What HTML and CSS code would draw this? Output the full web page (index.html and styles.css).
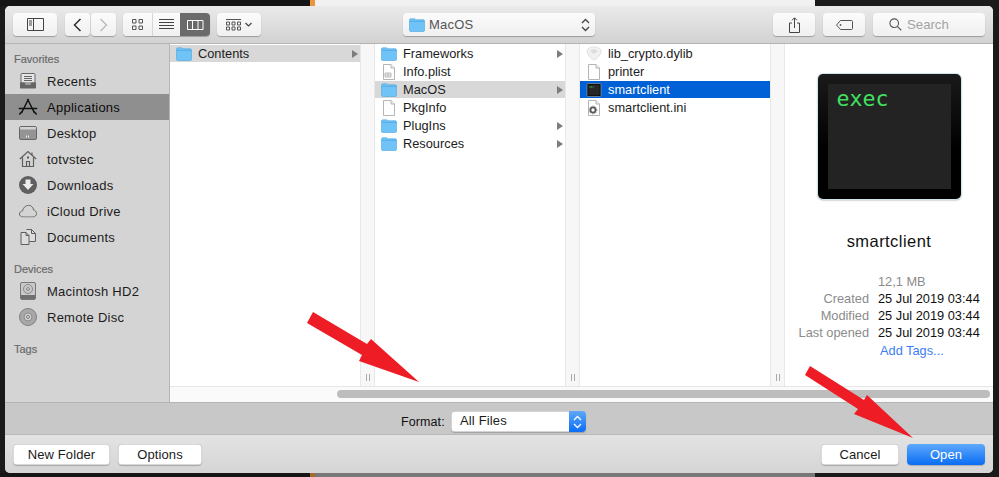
FILE: index.html
```html
<!DOCTYPE html>
<html lang="en">
<head>
<meta charset="utf-8">
<title>Open</title>
<link rel="stylesheet" href="styles.css">
</head>
<body>
<svg class="defs" width="0" height="0" aria-hidden="true">
  <symbol id="folder" viewBox="0 0 16 14">
    <path d="M.5 2.2C.5 1.3 1 .8 1.8.8h3.6c.7 0 1 .7 1.6.9h7.2c.8 0 1.3.5 1.3 1.3v9.2c0 .8-.5 1.3-1.3 1.3H1.8c-.8 0-1.3-.5-1.3-1.3z" fill="#6fc3f7" stroke="#4ea6dd" stroke-width=".6"/>
    <path d="M.6 3.4h14.8" stroke="#4ea6dd" stroke-width=".7" fill="none"/>
  </symbol>
  <symbol id="doc" viewBox="0 0 14 16">
    <path d="M1.5.5h7.5l3.5 3.5v11.5h-11z" fill="#fff" stroke="#b5b5b5"/>
    <path d="M9 .5v3.5h3.5" fill="#f0f0f0" stroke="#b5b5b5"/>
  </symbol>
  <symbol id="tri" viewBox="0 0 6 8"><path d="M0 0l6 4-6 4z" fill="#7c7c7c"/></symbol>
  <symbol id="updown" viewBox="0 0 9 14"><path d="M1 5l3.5-3.5L8 5M1 9l3.5 3.5L8 9" fill="none" stroke="currentColor" stroke-width="1.3"/></symbol>
</svg>

<div class="strip">
  <div class="strip-dark"></div><div class="strip-orange"></div><div class="strip-light"></div><div class="strip-rest"></div>
</div>

<div class="window">
  <header class="toolbar">
    <button class="tb tb-sidebar"><svg width="17" height="13" viewBox="0 0 17 13"><path d="M.5.5h16v12H.5zM6.5.5v12M2 3h3M2 5h3M2 7h3" fill="none" stroke="#444"/></svg></button>
    <div class="nav">
      <button class="tb tb-nav"><svg width="9" height="14" viewBox="0 0 9 14"><path d="M7.5 1L1.5 7l6 6" fill="none" stroke="#2c2c2c" stroke-width="1.5"/></svg></button>
      <button class="tb tb-nav"><svg width="9" height="14" viewBox="0 0 9 14"><path d="M1.5 1l6 6-6 6" fill="none" stroke="#bcbcbc" stroke-width="1.5"/></svg></button>
    </div>
    <div class="views">
      <button class="view view-a"><svg width="11" height="11" viewBox="0 0 11 11"><path d="M.5.5h3.500v3.500h-3.500zM7 .5h3.500v3.500H7zM.5 7h3.500v3.500h-3.500zM7 7h3.500v3.500H7z" fill="none" stroke="#555"/></svg></button>
      <button class="view view-b"><svg width="15" height="11" viewBox="0 0 15 11"><path d="M0 .5h15M0 3.500h15M0 6.500h15M0 9.500h15" stroke="#444"/></svg></button>
      <button class="view view-c"><svg width="17" height="10" viewBox="0 0 17 10"><path d="M.5.500h15.500v9H.5zM5.500.500v9M11 .500v9" fill="none" stroke="#fff"/></svg></button>
    </div>
    <button class="tb tb-arrange"><svg width="15" height="12" viewBox="0 0 15 12"><path d="M0 .5h15M.5 3h3v3h-3zM6 3h3v3H6zM11.500 3h3v3h-3zM.5 8h3v3h-3zM6 8h3v3H6zM11.500 8h3v3h-3z" fill="none" stroke="#555"/></svg><svg width="7" height="5" viewBox="0 0 7 5"><path d="M.5 1l3 3 3-3" fill="none" stroke="#444" stroke-width="1.200"/></svg></button>
    <button class="tb tb-path">
      <svg class="ic16" width="16" height="14"><use href="#folder"/></svg>
      <span class="path-name">MacOS</span>
      <svg class="path-arrows" width="9" height="14"><use href="#updown"/></svg>
    </button>
    <button class="tb tb-icon"><svg width="11" height="16" viewBox="0 0 11 16"><path d="M3 6H.5v9.500h10V6H8M5.500 11V1M3 3.300L5.500.8 8 3.300" fill="none" stroke="#444"/></svg></button>
    <button class="tb tb-icon"><svg width="17" height="10" viewBox="0 0 17 10"><path d="M4.500.5h11c.6 0 1 .4 1 1v7c0 .6-.4 1-1 1h-11L.5 5z" fill="none" stroke="#555"/><circle cx="4.500" cy="5" r=".9" fill="#555"/></svg></button>
    <div class="tb tb-search">
      <svg width="13" height="13" viewBox="0 0 13 13"><circle cx="5.200" cy="5.200" r="4.300" fill="none" stroke="#555" stroke-width="1.100"/><path d="M8.300 8.300l4 4" stroke="#555" stroke-width="1.200"/></svg>
      <span>Search</span>
    </div>
  </header>

  <main class="body">
    <nav class="sidebar">
      <div class="side-head">Favorites</div>
      <div class="side-item"><svg width="18" height="16" viewBox="0 0 18 16"><path d="M2 10V1.500C2 1 2.500.5 3 .5h12c.5 0 1 .5 1 1V10z" fill="#e6e6e6" stroke="#666"/><path d="M5 3.500h8M5 5.500h8M5 7.500h8" stroke="#666"/><path d="M1 9.500h4.500l1 2h5l1-2H17v5c0 .6-.4 1-1 1H2c-.6 0-1-.4-1-1z" fill="#666"/></svg><span>Recents</span></div>
      <div class="side-item side-active"><svg width="19" height="18" viewBox="0 0 19 18"><path d="M10 1L3 15M9 1L16 15M0 10.500h19M.8 16.500L4 13M18.200 16.500L15 13" fill="none" stroke="#111" stroke-width="1.500"/></svg><span>Applications</span></div>
      <div class="side-item"><svg width="18" height="14" viewBox="0 0 18 14"><rect x=".5" y=".5" width="17" height="13" rx="1.500" fill="#949494" stroke="#666"/><rect x="1" y="1" width="16" height="2.500" fill="#d2d2d2"/><path d="M7 10.500h4" stroke="#eee" stroke-dasharray="1 1" stroke-width="2"/></svg><span>Desktop</span></div>
      <div class="side-item"><svg width="18" height="17" viewBox="0 0 18 17"><path d="M.8 8.500L9 1l8.200 7.500M3.500 7v9h11V7M7.500 16v-5h3v5M13 2v3" fill="none" stroke="#5e5e5e" stroke-width="1.200"/><rect x="8" y="6" width="2" height="2" fill="#5e5e5e"/></svg><span>totvstec</span></div>
      <div class="side-item"><svg width="18" height="18" viewBox="0 0 18 18"><circle cx="9" cy="9" r="9" fill="#5f5f5f"/><path d="M6.500 3.500h5V8H14.500L9 14 3.500 8h3z" fill="#ececec"/></svg><span>Downloads</span></div>
      <div class="side-item"><svg width="18" height="13" viewBox="0 0 18 13"><path d="M4 12.500c-2 0-3.500-1.300-3.500-3 0-1.600 1.200-2.800 3-3C4 3.500 6.500.8 9.500.8c2.800 0 4.700 1.900 5 4.700 1.800.3 3 1.700 3 3.500 0 2-1.500 3.500-3.500 3.500z" fill="none" stroke="#6b6b6b"/></svg><span>iCloud Drive</span></div>
      <div class="side-item"><svg width="17" height="17" viewBox="0 0 17 17"><path d="M1.500 4h5l3 3v9h-8zM6.500 4v3h3M7 1h5l4 4v8h-6" fill="#ddd" stroke="#5e5e5e"/><path d="M12 1v4h4" fill="none" stroke="#5e5e5e"/></svg><span>Documents</span></div>
      <div class="side-head side-head-gap">Devices</div>
      <div class="side-item"><svg width="16" height="18" viewBox="0 0 16 18"><rect x=".5" y=".5" width="15" height="17" rx="1.500" fill="#c9c9c9" stroke="#777"/><circle cx="8" cy="7" r="4.500" fill="none" stroke="#8a8a8a"/><circle cx="8" cy="7" r="1.500" fill="none" stroke="#8a8a8a"/><rect x="1" y="13" width="14" height="4" fill="#707070"/></svg><span>Macintosh HD2</span></div>
      <div class="side-item"><svg width="18" height="18" viewBox="0 0 18 18"><circle cx="9" cy="9" r="8.500" fill="#a8a8a8" stroke="#808080"/><circle cx="9" cy="9" r="4" fill="#cfcfcf" stroke="#8b8b8b"/><circle cx="9" cy="9" r="1.500" fill="#e2e2e2" stroke="#777"/></svg><span>Remote Disc</span></div>
      <div class="side-head side-head-gap">Tags</div>
    </nav>

    <div class="browser">
      <div class="columns">
        <section class="column">
          <div class="row row-dim"><svg class="ic16" width="16" height="14"><use href="#folder"/></svg><span class="row-name">Contents</span><svg class="tri" width="6" height="8"><use href="#tri"/></svg></div>
        </section>
        <div class="gutter"><i></i><i></i></div>
        <section class="column">
          <div class="row"><svg class="ic16" width="16" height="14"><use href="#folder"/></svg><span class="row-name">Frameworks</span><svg class="tri" width="6" height="8"><use href="#tri"/></svg></div>
          <div class="row"><svg class="ic16" width="14" height="16"><use href="#doc"/><path d="M4 9h6v4H4zM7 9v4M4 11h6" fill="none" stroke="#aaa" stroke-width=".8"/></svg><span class="row-name">Info.plist</span></div>
          <div class="row row-dim"><svg class="ic16" width="16" height="14"><use href="#folder"/></svg><span class="row-name">MacOS</span><svg class="tri" width="6" height="8"><use href="#tri"/></svg></div>
          <div class="row"><svg class="ic16" width="14" height="16"><use href="#doc"/></svg><span class="row-name">PkgInfo</span></div>
          <div class="row"><svg class="ic16" width="16" height="14"><use href="#folder"/></svg><span class="row-name">PlugIns</span><svg class="tri" width="6" height="8"><use href="#tri"/></svg></div>
          <div class="row"><svg class="ic16" width="16" height="14"><use href="#folder"/></svg><span class="row-name">Resources</span><svg class="tri" width="6" height="8"><use href="#tri"/></svg></div>
        </section>
        <div class="gutter"><i></i><i></i></div>
        <section class="column">
          <div class="row"><svg class="ic16" width="16" height="15" viewBox="0 0 16 15"><path d="M8 1c3 0 6 1 7 3 0 5-3 8-7 10C4 12 1 9 1 4c1-2 4-3 7-3z" fill="#f1f1f1" stroke="#e0e0e0"/><path d="M4 5l4-2 4 2-4 3z" fill="#dcdcdc"/></svg><span class="row-name">lib_crypto.dylib</span></div>
          <div class="row"><svg class="ic16" width="14" height="16"><use href="#doc"/></svg><span class="row-name">printer</span></div>
          <div class="row row-sel"><svg class="ic16" width="15" height="14" viewBox="0 0 15 14"><rect x=".5" y=".5" width="14" height="13" rx="1" fill="#111" stroke="#bbb" stroke-width=".5"/><rect x="2" y="2" width="11" height="10" fill="#262626"/><path d="M3 4h4" stroke="#3fe060" stroke-dasharray="1 .6"/></svg><span class="row-name">smartclient</span></div>
          <div class="row"><svg class="ic16" width="14" height="16"><use href="#doc"/><circle cx="7" cy="10" r="2.500" fill="none" stroke="#555" stroke-width="1.600"/><circle cx="7" cy="10" r="3.800" fill="none" stroke="#555" stroke-width="1" stroke-dasharray="1 1"/></svg><span class="row-name">smartclient.ini</span></div>
        </section>
        <div class="gutter"><i></i><i></i></div>
        <aside class="preview">
          <div class="big-icon"><div class="big-screen">exec</div></div>
          <div class="file-name">smartclient</div>
          <dl class="meta">
            <dt></dt><dd class="meta-size">12,1 MB</dd>
            <dt>Created</dt><dd>25 Jul 2019 03:44</dd>
            <dt>Modified</dt><dd>25 Jul 2019 03:44</dd>
            <dt>Last opened</dt><dd>25 Jul 2019 03:44</dd>
            <dt></dt><dd class="meta-link">Add Tags...</dd>
          </dl>
        </aside>
      </div>
      <div class="hscroll"><div class="thumb"></div></div>
    </div>
  </main>

  <div class="format">
    <span class="format-label">Format:</span>
    <div class="select"><span class="select-text">All Files</span><span class="select-arrows"><svg width="9" height="14"><use href="#updown"/></svg></span></div>
  </div>

  <footer class="actions">
    <button class="btn btn-new">New Folder</button>
    <button class="btn btn-options">Options</button>
    <span class="actions-space"></span>
    <button class="btn btn-cancel">Cancel</button>
    <button class="btn btn-open">Open</button>
  </footer>

  <svg class="arrows" width="999" height="477" viewBox="0 0 999 477" aria-hidden="true">
    <path d="M313 312L367 344L371 339L419 382L359 361L362 355L307 323z" fill="#ee1c25"/>
    <path d="M810 366L864 400L867 395L913 438L854 414L858 409L805 375z" fill="#ee1c25"/>
  </svg>
</div>

<div class="strip strip-bottom">
  <div class="strip-dark"></div><div class="strip-orange"></div><div class="strip-light"></div><div class="strip-rest"></div>
</div>
</body>
</html>
```

FILE: styles.css
```css
* { box-sizing: border-box; }
html, body { margin: 0; height: 477px; overflow: hidden; }
body {
  background: #1a1a1a;
  font-family: "Liberation Sans", Arial, sans-serif;
  font-size: 13px;
  color: #1c1c1c;
  display: flex;
  flex-direction: column;
  position: relative;
}
.defs { position: absolute; }
button { font: inherit; color: inherit; padding: 0; margin: 0; }

.strip { height: 6px; display: flex; flex: none; }
.strip-bottom { height: 4px; }
.strip-dark { width: 310px; background: #151515; }
.strip-orange { width: 5px; background: #e9963a; }
.strip-light { width: 500px; background: #f1f1f1; }
.strip-rest { flex: 1; background: #1b1b1b; }
.strip-bottom .strip-orange { background: #a8692a; }
.strip-bottom .strip-light { background: #787878; }

.window {
  flex: none;
  height: 467px;
  margin: 0 6px 0 5px;
  border-radius: 5px;
  overflow: hidden;
  display: flex;
  flex-direction: column;
  background: #d4d4d4;
}

.toolbar {
  flex: none;
  height: 38px;
  padding: 7px 8px 0;
  display: flex;
  align-items: flex-start;
  background: linear-gradient(#eaeaea, #d2d2d2);
  border-bottom: 1px solid #b4b4b4;
}
.tb {
  height: 23px;
  border: 0;
  border-radius: 4px;
  background: linear-gradient(#fbfbfb, #f0f0f0);
  box-shadow: 0 1px 1px rgba(0,0,0,.28);
  display: flex;
  align-items: center;
  justify-content: center;
}
.tb-sidebar { width: 44px; }
.nav { display: flex; gap: 1px; margin-left: 8px; }
.tb-nav { width: 25px; }
.views {
  display: flex;
  margin-left: 7px;
  height: 23px;
  border-radius: 4px;
  overflow: hidden;
  box-shadow: 0 1px 1px rgba(0,0,0,.28);
}
.view {
  border: 0;
  height: 23px;
  background: linear-gradient(#fbfbfb, #f0f0f0);
  display: flex;
  align-items: center;
  justify-content: center;
}
.view-a { width: 30px; border-right: 1px solid #d6d6d6; }
.view-b { width: 27px; }
.view-c { width: 30px; background: #6a6a6a; }
.tb-arrange { width: 44px; margin-left: 7px; gap: 4px; }
.tb-path {
  width: 192px;
  margin-left: 142px;
  margin-right: 178px;
  padding: 0 5px 0 6px;
  justify-content: flex-start;
}
.path-name { margin-left: 4px; font-size: 13px; letter-spacing: .2px; color: #555; flex: 1; text-align: left; }
.path-arrows { color: #444; }
.tb-icon { width: 42px; margin-right: 8px; }
.tb-search {
  width: 112px;
  justify-content: flex-start;
  padding-left: 16px;
  gap: 5px;
  color: #a3a3a3;
  font-size: 13.2px;
}

.body { flex: none; height: 358px; display: flex; }

.sidebar {
  flex: none;
  width: 165px;
  background: #d4d4d4;
  border-right: 1px solid #b6b6b6;
  padding-top: 6px;
}
.side-head {
  height: 18px;
  line-height: 18px;
  padding-left: 9px;
  font-size: 11px;
  font-weight: 400;
  color: #6a6a6a;
  -webkit-text-stroke: .2px #6a6a6a;
}
.side-head-gap { margin-top: 10px; }
.side-item {
  height: 26px;
  display: flex;
  align-items: center;
  padding-left: 42px;
  position: relative;
  letter-spacing: .25px;
}
.side-item svg { position: absolute; left: 23px; top: 50%; transform: translate(-50%, -50%); }
.side-active { background: #8f8f8f; color: #0b0b0b; }

.browser { flex: 1; min-width: 0; display: flex; flex-direction: column; background: #fff; }
.columns { flex: 1; min-height: 0; display: flex; }
.column { flex: none; width: 190px; padding-top: 1px; background: #fff; }
.row {
  height: 17px;
  margin-bottom: 1px;
  display: flex;
  align-items: center;
  padding: 0 2px 0 6px;
}
.row-dim { background: #d8d8d8; }
.row-sel { background: #0060d5; color: #fff; }
.ic16 { flex: none; width: 16px; }
.row-name { margin-left: 6px; flex: 1; font-size: 12.8px; }
.tri { flex: none; }
.gutter {
  flex: none;
  width: 15px;
  background: #f7f7f7;
  border-left: 1px solid #e8e8e8;
  border-right: 1px solid #e8e8e8;
  display: flex;
  align-items: flex-end;
  justify-content: center;
  gap: 2px;
  padding-bottom: 5px;
}
.gutter i { width: 1px; height: 7px; background: #a8a8a8; }

.preview { flex: 1; min-width: 0; background: #fff; padding-top: 30px; display: flex; flex-direction: column; align-items: center; }
.big-icon {
  width: 143px;
  height: 125px;
  flex: none;
  padding: 10px;
  border-radius: 5px;
  background: linear-gradient(#1a1a1a, #000 60%);
  box-shadow: 0 0 0 1px #cfe3ea, 0 1px 2px rgba(0,0,0,.5);
}
.big-screen {
  width: 123px;
  height: 105px;
  background: #232323;
  padding: 2px 9px;
  color: #3fe060;
  font-family: "DejaVu Sans Mono", monospace;
  font-size: 21.6px;
  line-height: 26px;
}
.file-name { margin-top: 32px; height: 20px; line-height: 20px; font-size: 16.5px; letter-spacing: .45px; color: #111; }
.meta {
  align-self: flex-start;
  margin: 22px 0 0;
  display: grid;
  grid-template-columns: 84px auto;
  column-gap: 9px;
  grid-auto-rows: 17px;
  line-height: 17px;
  font-size: 12.8px;
}
.meta dt { text-align: right; color: #8b8b8b; }
.meta dd { margin: 0; color: #111; }
.meta-size { color: #8b8b8b !important; }
.meta-link { color: #3c7cf6 !important; margin-left: 2px !important; padding-top: 1px; }

.hscroll {
  flex: none;
  height: 16px;
  background: #fafafa;
  border-top: 1px solid #e6e6e6;
  padding: 3px 3px 0 167px;
}
.thumb { height: 8px; border-radius: 4px; background: #bdbdbd; }

.format {
  flex: none;
  height: 33px;
  background: #c8c8c8;
  border-top: 1px solid #b4b4b4;
  border-bottom: 1px solid #b9b9b9;
  display: flex;
  align-items: center;
  padding: 6px 0 0 396px;
  gap: 6px;
}
.format-label { width: 44px; color: #111; font-size: 12.5px; letter-spacing: .1px; }
.select {
  width: 135px;
  height: 21px;
  border-radius: 4px;
  background: #fff;
  box-shadow: inset 0 0 0 .5px #aaa, 0 1px 1px rgba(0,0,0,.2);
  display: flex;
  align-items: stretch;
  overflow: hidden;
}
.select-text { flex: 1; line-height: 20px; padding-left: 9px; letter-spacing: .15px; }
.select-arrows {
  width: 17px;
  background: linear-gradient(#5ea8fb, #0a6df5);
  color: #fff;
  display: flex;
  align-items: center;
  justify-content: center;
}

.actions {
  flex: 1;
  display: flex;
  align-items: flex-start;
  padding: 9px 8px 0;
  gap: 8px;
  background: linear-gradient(#e3e3e3, #d5d5d5);
}
.actions-space { flex: 1; }
.btn {
  height: 21px;
  border: 0;
  border-radius: 4px;
  background: #fff;
  box-shadow: inset 0 0 0 .5px #b4b4b4, 0 1px 1px rgba(0,0,0,.22);
  color: #1b1b1b;
  letter-spacing: .1px;
}
.btn-new { width: 97px; }
.btn-options { width: 84px; }
.btn-cancel { width: 78px; }
.btn-open { width: 78px; color: #fff; background: linear-gradient(#5ea8fb, #0a6df5); box-shadow: 0 1px 1px rgba(0,0,0,.2); }

.arrows { position: absolute; left: 0; top: 0; pointer-events: none; }
```
